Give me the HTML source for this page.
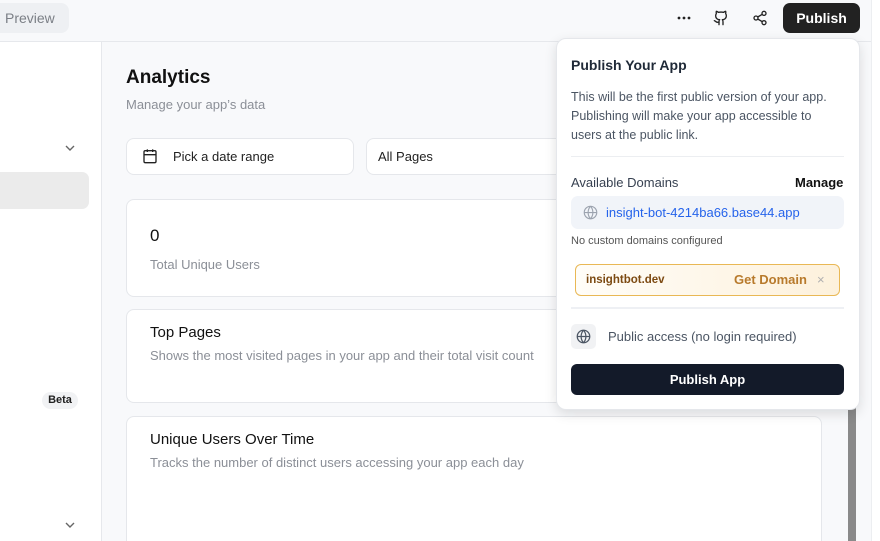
<!DOCTYPE html>
<html><head><meta charset="utf-8"><style>
*{box-sizing:border-box;margin:0;padding:0}
html,body{width:880px;height:541px;overflow:hidden}
body{background:#f8f9fb;font-family:"Liberation Sans",sans-serif;position:relative;color:#111827}
.abs{position:absolute}
.top{left:0;top:0;width:880px;height:42px;border-bottom:1px solid #e6e8ec;background:#f8f9fb}
.side{left:0;top:42px;width:102px;height:499px;background:#fff;border-right:1px solid #e6e8ec}
.card{background:#fff;border:1px solid #e5e7eb;border-radius:8px}
.muted{color:#8b8f97}
.pop{left:556px;top:38px;width:304px;height:372px;background:#fff;border:1px solid #e5e7eb;border-radius:10px;box-shadow:0 4px 12px rgba(0,0,0,.12)}
</style></head><body>
<div class="abs top"></div>
<div class="abs" style="left:-10px;top:3px;width:79px;height:30px;background:#eef0f3;border-radius:8px"></div>
<div class="abs" style="left:5px;top:10px;font-size:14px;color:#7b7f86">Preview</div>
<svg class="abs" style="left:677px;top:16px" width="14" height="4" viewBox="0 0 14 4"><circle cx="2" cy="2" r="1.4" fill="#222"/><circle cx="7" cy="2" r="1.4" fill="#222"/><circle cx="12" cy="2" r="1.4" fill="#222"/></svg>
<svg class="abs" style="left:713px;top:10px" width="16" height="16" viewBox="0 0 24 24" fill="none" stroke="#222" stroke-width="2" stroke-linecap="round" stroke-linejoin="round"><path d="M15 22v-4a4.8 4.8 0 0 0-1-3.5c3 0 6-2 6-5.5.08-1.25-.27-2.48-1-3.5.28-1.15.28-2.35 0-3.5 0 0-1 0-3 1.5-2.64-.5-5.36-.5-8 0C6 2 5 2 5 2c-.3 1.150-.3 2.35 0 3.5A5.4 5.4 0 0 0 4 9c0 3.5 3 5.5 6 5.5-.39.49-.68 1.05-.85 1.65S8.930 17.38 9 18v4"/><path d="M9 18c-4.51 2-5-2-7-2"/></svg>
<svg class="abs" style="left:752px;top:10px" width="16" height="16" viewBox="0 0 24 24" fill="none" stroke="#222" stroke-width="2"><circle cx="18" cy="5" r="3"/><circle cx="6" cy="12" r="3"/><circle cx="18" cy="19" r="3"/><path d="M8.6 13.5l6.8 4M15.4 6.5l-6.8 4"/></svg>
<div class="abs" style="left:783px;top:3px;width:77px;height:30px;background:#222;border-radius:7px;color:#fff;font-size:14px;font-weight:bold;text-align:center;line-height:30px">Publish</div>
<div class="abs side"></div>
<svg class="abs" style="left:64px;top:143px" width="12" height="10" viewBox="0 0 12 10"><path d="M2 3l4 4 4-4" fill="none" stroke="#666" stroke-width="1.4"/></svg>
<div class="abs" style="left:-10px;top:172px;width:99px;height:37px;background:#ebebeb;border-radius:7px"></div>
<div class="abs" style="left:42px;top:392px;width:36px;height:17px;background:#f1f2f4;border-radius:9px;font-size:11px;font-weight:bold;text-align:center;line-height:17px;color:#222">Beta</div>
<svg class="abs" style="left:64px;top:520px" width="12" height="10" viewBox="0 0 12 10"><path d="M2 3l4 4 4-4" fill="none" stroke="#666" stroke-width="1.4"/></svg>
<div class="abs" style="left:126px;top:67px;font-size:19px;font-weight:bold;color:#111">Analytics</div>
<div class="abs muted" style="left:126px;top:97px;font-size:13px">Manage your app’s data</div>
<div class="abs card" style="left:126px;top:138px;width:228px;height:37px"></div>
<svg class="abs" style="left:142px;top:148px" width="16" height="16" viewBox="0 0 24 24" fill="none" stroke="#222" stroke-width="2"><rect x="3" y="4" width="18" height="18" rx="2"/><path d="M16 2v4M8 2v4M3 10h18"/></svg>
<div class="abs" style="left:173px;top:149px;font-size:13px;color:#222">Pick a date range</div>
<div class="abs card" style="left:366px;top:138px;width:210px;height:37px"></div>
<div class="abs" style="left:378px;top:149px;font-size:13px;color:#222">All Pages</div>
<div class="abs card" style="left:126px;top:199px;width:450px;height:98px"></div>
<div class="abs" style="left:150px;top:226px;font-size:17px;color:#111">0</div>
<div class="abs muted" style="left:150px;top:257px;font-size:13px">Total Unique Users</div>
<div class="abs card" style="left:126px;top:309px;width:450px;height:94px"></div>
<div class="abs" style="left:150px;top:324px;font-size:15px;color:#111">Top Pages</div>
<div class="abs muted" style="left:150px;top:348px;font-size:13px;white-space:nowrap">Shows the most visited pages in your app and their total visit count</div>
<div class="abs card" style="left:126px;top:416px;width:696px;height:140px"></div>
<div class="abs" style="left:150px;top:431px;font-size:15px;color:#111">Unique Users Over Time</div>
<div class="abs muted" style="left:150px;top:455px;font-size:13px">Tracks the number of distinct users accessing your app each day</div>
<div class="abs" style="left:848px;top:408px;width:8px;height:133px;background:#8a8a8a"></div>
<div class="abs" style="left:871px;top:0;width:9px;height:541px;background:#fff;border-left:1px solid #eceef1"></div>
<div class="abs pop"></div>
<div class="abs" style="left:571px;top:57px;font-size:14px;font-weight:bold;color:#1f2937">Publish Your App</div>
<div class="abs" style="left:571px;top:88px;width:262px;font-size:12.5px;line-height:19px;color:#4b5563">This will be the first public version of your app. Publishing will make your app accessible to users at the public link.</div>
<div class="abs" style="left:571px;top:156px;width:273px;height:1px;background:#eceef1"></div>
<div class="abs" style="left:571px;top:175px;font-size:13px;color:#374151">Available Domains</div>
<div class="abs" style="left:795px;top:175px;font-size:13px;font-weight:bold;color:#111">Manage</div>
<div class="abs" style="left:571px;top:196px;width:273px;height:33px;background:#f1f4f9;border-radius:7px"></div>
<svg class="abs" style="left:583px;top:205px" width="15" height="15" viewBox="0 0 24 24" fill="none" stroke="#9ca3af" stroke-width="1.8"><circle cx="12" cy="12" r="10"/><path d="M2 12h20M12 2a15 15 0 0 1 0 20M12 2a15 15 0 0 0 0 20"/></svg>
<div class="abs" style="left:606px;top:205px;font-size:13px;color:#2563eb">insight-bot-4214ba66.base44.app</div>
<div class="abs" style="left:571px;top:235px;font-size:11px;color:#555">No custom domains configured</div>
<div class="abs" style="left:575px;top:264px;width:265px;height:32px;border:1px solid #e9b855;border-radius:6px;background:linear-gradient(90deg,#fffdf8,#fdf1dc)"></div>
<div class="abs" style="left:586px;top:274px;font-size:11.5px;font-weight:bold;color:#7c4a12">insightbot.dev</div>
<div class="abs" style="left:734px;top:272px;font-size:13px;font-weight:bold;color:#b87a2c">Get Domain</div>
<div class="abs" style="left:817px;top:272px;font-size:13px;color:#b0b0b0">×</div>
<div class="abs" style="left:571px;top:307px;width:273px;height:2px;background:#eef0f4"></div>
<div class="abs" style="left:571px;top:324px;width:25px;height:25px;background:#f1f2f4;border-radius:5px"></div>
<svg class="abs" style="left:576px;top:329px" width="15" height="15" viewBox="0 0 24 24" fill="none" stroke="#4b5563" stroke-width="2"><circle cx="12" cy="12" r="10"/><path d="M2 12h20M12 2a15 15 0 0 1 0 20M12 2a15 15 0 0 0 0 20"/></svg>
<div class="abs" style="left:608px;top:329px;font-size:13px;color:#4b5563">Public access (no login required)</div>
<div class="abs" style="left:571px;top:364px;width:273px;height:31px;background:#131a29;border-radius:6px;color:#fff;font-size:13px;font-weight:bold;text-align:center;line-height:31px">Publish App</div>
</body></html>
